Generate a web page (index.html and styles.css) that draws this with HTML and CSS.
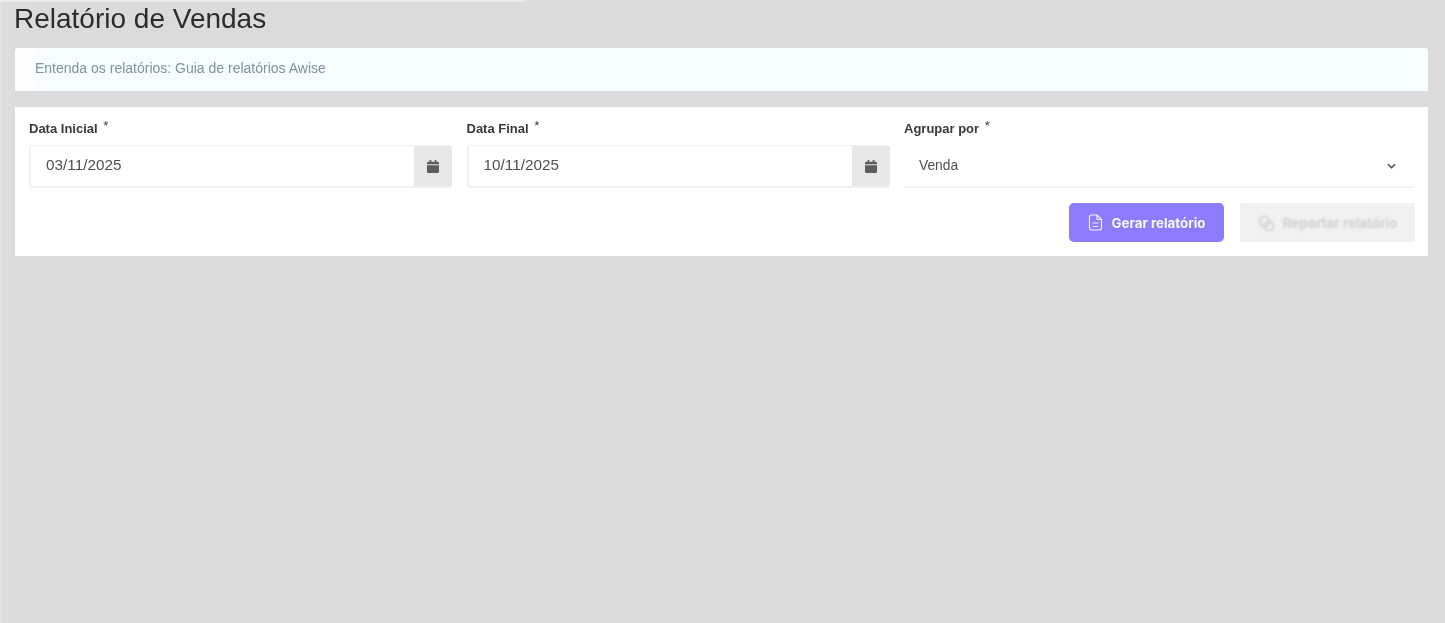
FILE: index.html
```html
<!DOCTYPE html>
<html lang="pt-BR">
<head>
<meta charset="utf-8">
<title>Relatório de Vendas</title>
<link rel="stylesheet" href="styles.css">
</head>
<body>
<div class="top-sliver"></div>
<main class="page">
  <h1 class="title">Relatório de Vendas</h1>
  <div class="banner">Entenda os relatórios: Guia de relatórios Awise</div>
  <div class="strip"></div>
  <section class="card">
    <div class="fields">
      <div class="field">
        <label class="label">Data Inicial <span class="req">*</span></label>
        <div class="date-group">
          <div class="date-value">03/11/2025</div>
          <div class="addon">
            <svg class="cal" viewBox="0 0 14 15" aria-hidden="true"><path d="M3 0h2v2h4V0h2v2h1.5A1.5 1.5 0 0 1 14 3.5V5H0V3.500A1.500 1.500 0 0 1 1.500 2H3zM0 6h14v7.500a1.500 1.500 0 0 1-1.500 1.500h-11A1.500 1.500 0 0 1 0 13.500z"/></svg>
          </div>
        </div>
      </div>
      <div class="field">
        <label class="label">Data Final <span class="req">*</span></label>
        <div class="date-group">
          <div class="date-value">10/11/2025</div>
          <div class="addon">
            <svg class="cal" viewBox="0 0 14 15" aria-hidden="true"><path d="M3 0h2v2h4V0h2v2h1.5A1.5 1.5 0 0 1 14 3.5V5H0V3.500A1.500 1.500 0 0 1 1.500 2H3zM0 6h14v7.500a1.500 1.500 0 0 1-1.500 1.500h-11A1.500 1.500 0 0 1 0 13.500z"/></svg>
          </div>
        </div>
      </div>
      <div class="field">
        <label class="label">Agrupar por <span class="req">*</span></label>
        <div class="select">
          <span>Venda</span>
          <svg class="chev" viewBox="0 0 10 6" aria-hidden="true"><path d="M1 1l4 4 4-4"/></svg>
        </div>
      </div>
    </div>
    <div class="actions">
      <button class="btn btn-primary" type="button">
        <svg class="doc" viewBox="0 0 14 17" aria-hidden="true"><path d="M2.500 1h6L13 5.500V14a2 2 0 0 1-2 2H3a2 2 0 0 1-2-2V2.500A1.500 1.500 0 0 1 2.500 1zM8.500 1v4.500H13M4 9h6M4 12.500h6"/></svg>
        Gerar relatório
      </button>
      <button class="btn btn-disabled" type="button">
        <span class="blurred">
          <svg class="copy" viewBox="0 0 16 16" aria-hidden="true"><circle cx="6.500" cy="6.500" r="5"/><rect x="7" y="7" width="8" height="8" rx="2"/></svg>
          Reportar relatório
        </span>
      </button>
    </div>
  </section>
</main>
</body>
</html>
```
FILE: styles.css
```css
* { box-sizing: border-box; }
html, body { height: 100%; }
body {
  margin: 0;
  background: linear-gradient(90deg, #e2e2e3 0, #e0e0e1 2px, #dddddd 3px, #dcdcdc 32px, #dbdbdb 34px);
  font-family: "Liberation Sans", Arial, sans-serif;
  color: #333;
  overflow: hidden;
}
.top-sliver {
  height: 2px;
  width: 525px;
  background: #eaeaec;
  margin-bottom: -2px;
}
.page {
  padding: 0 17px 0 15px;
  filter: blur(0.35px);
}
.title {
  margin: 0 0 0 -1px;
  height: 48px;
  padding-top: 4px;
  font-size: 28px;
  line-height: 30px;
  font-weight: 400;
  color: #2a2c2e;
}
.banner {
  height: 43px;
  line-height: 40px;
  padding-left: 20px;
  background: linear-gradient(90deg, #fdfefe 0, #fdfefe 18px, #f6fdfe 24px);
  border-radius: 3px 3px 0 0;
  font-size: 14px;
  color: #7d94a3;
}
.strip { height: 16px; background: #d9dbdc; }
.card {
  height: 149px;
  background: #fff;
  padding: 14px 14px 0;
}
.fields {
  display: grid;
  grid-template-columns: 423px 423px 1fr;
  column-gap: 14.500px;
}
.label {
  display: block;
  height: 24px;
  line-height: 16px;
  font-size: 13px;
  font-weight: 700;
  color: #3a3a3a;
}
.req {
  position: relative;
  top: -3px;
  margin-left: 2px;
  font-weight: 400;
}
.date-group {
  display: flex;
  height: 43px;
  border: 1px solid #f0f0f0;
  border-width: 1px 0 2px 2px;
  border-radius: 3px;
  background: #fff;
  overflow: hidden;
}
.date-value {
  flex: 1;
  padding-left: 15px;
  line-height: 38px;
  font-size: 15.300px;
  color: #505050;
}
.addon {
  width: 38px;
  background: #e7e7e7;
  display: flex;
  align-items: center;
  justify-content: center;
}
.cal { width: 12px; height: 13px; fill: #5c5c5c; }
.select {
  display: flex;
  align-items: center;
  justify-content: space-between;
  height: 43px;
  margin-bottom: 1px;
  padding: 0 18px 0 15px;
  border-bottom: 2px solid #f4f4f4;
  font-size: 13.800px;
  color: #505050;
}
.chev {
  width: 9px;
  height: 6px;
  fill: none;
  stroke: #444;
  stroke-width: 1.500;
}
.actions {
  display: flex;
  justify-content: flex-end;
  gap: 16px;
  margin: 14px -1px 0 0;
}
.btn {
  display: flex;
  align-items: center;
  justify-content: center;
  height: 39px;
  border: 0;
  border-radius: 5px;
  font-family: "Inter", sans-serif;
  font-size: 13.300px;
  font-weight: 700;
}
.btn-primary {
  width: 155px;
  gap: 9px;
  background: #8a7cfb;
  color: #f8f7ff;
}
.doc {
  width: 15px;
  height: 17px;
  fill: none;
  stroke: #f0eeff;
  stroke-width: 1.200;
}
.btn-disabled {
  width: 175px;
  background: #f1f1f1;
  border-radius: 2px;
  color: #cdcdcd;
}
.blurred {
  display: flex;
  align-items: center;
  gap: 9px;
  font-size: 13.500px;
  font-weight: 600;
  filter: blur(1.200px);
}
.copy {
  width: 16px;
  height: 16px;
  fill: none;
  stroke: #cdcdcd;
  stroke-width: 1.500;
}
```
